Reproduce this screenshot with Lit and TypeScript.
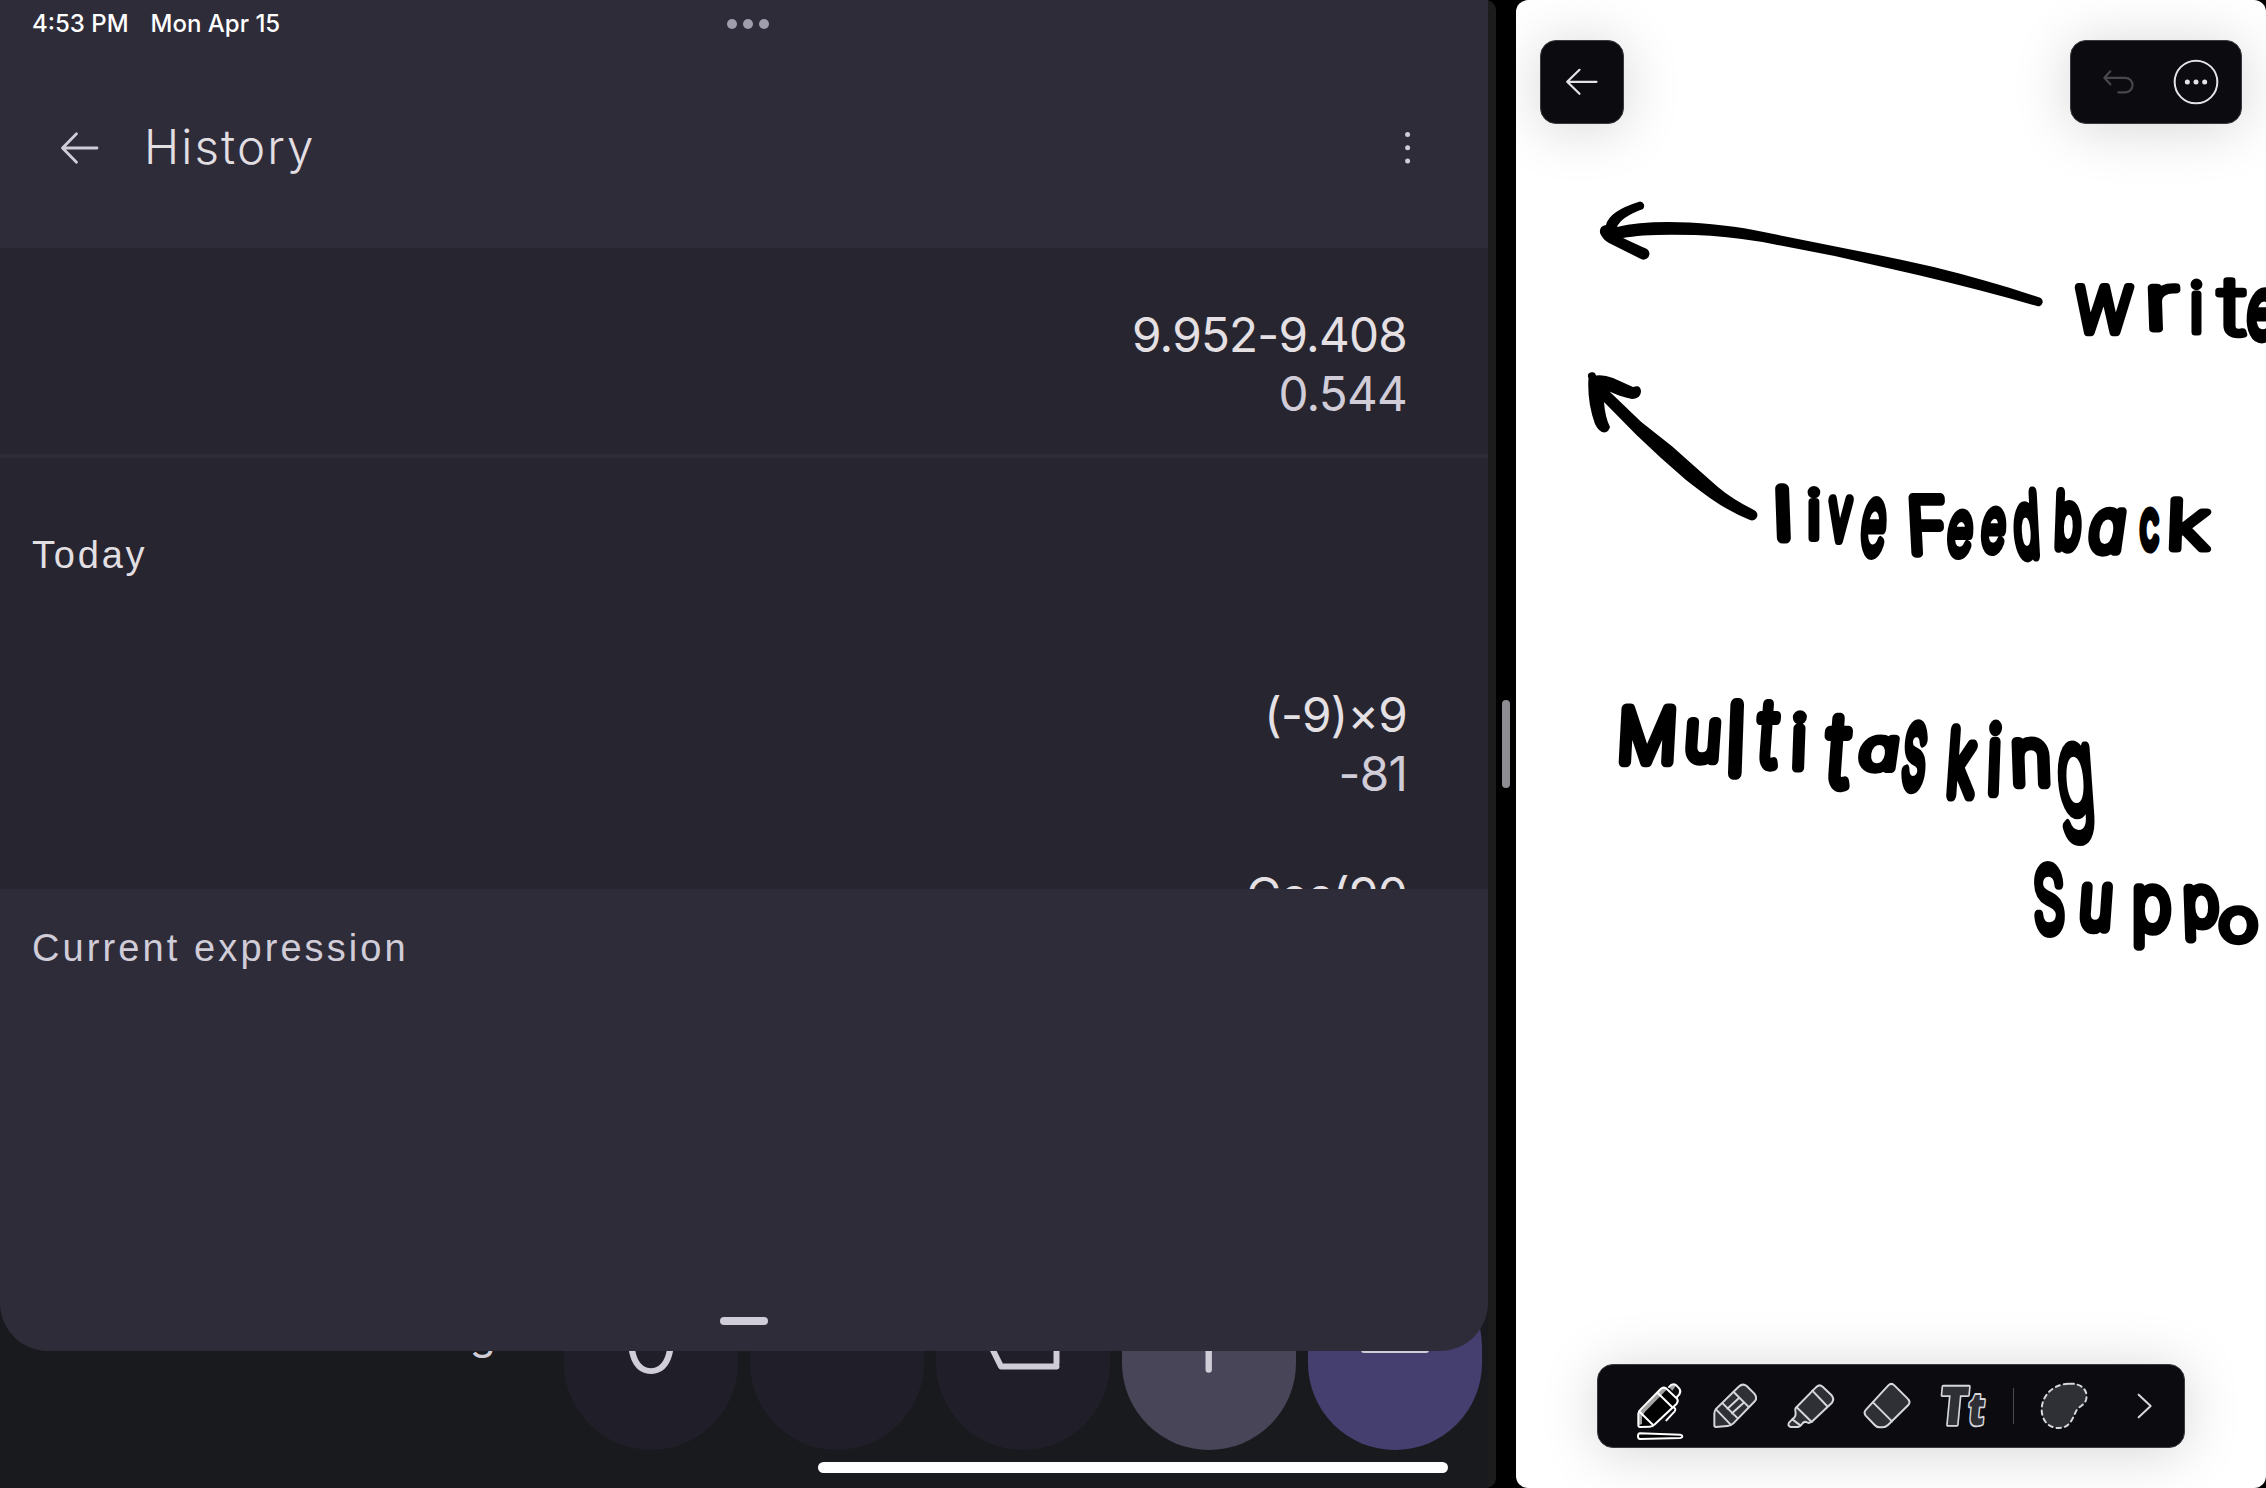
import { LitElement, html, svg, css } from "lit";
import { customElement } from "lit/decorators.js";

type Row = { expr: string; result: string };
/** glyph, left, top, right, bottom, slant in degrees, pen width */
type Ink = [string, number, number, number, number, number?, number?];

const TODAY: Row[] = [
  { expr: "(-9)×9", result: "-81" },
  { expr: "Cos(90", result: "0" },
];

const INK: Ink[] = [
  ["w", 2072, 283, 2135, 336, 3, 12],
  ["r", 2148, 283, 2182, 333, -2, 12],
  ["i", 2190, 278, 2203, 335, 0, 11],
  ["t", 2215, 276, 2247, 340, 0, 11],
  ["e", 2244, 288, 2282, 342, 4, 13],
  ["l", 1775, 483, 1791, 543, -2, 15],
  ["i", 1805, 486, 1823, 542, 0, 12],
  ["v", 1825, 495, 1855, 543, 3, 13],
  ["e", 1857, 498, 1890, 558, 5, 12],
  ["F", 1908, 493, 1948, 557, -3, 13],
  ["e", 1944, 510, 1976, 559, 5, 12],
  ["e", 1978, 507, 2009, 555, 5, 12],
  ["d", 2010, 489, 2042, 561, -3, 13],
  ["b", 2053, 488, 2084, 552, 2, 13],
  ["a", 2085, 507, 2124, 556, 8, 13],
  ["c", 2138, 508, 2161, 552, 0, 12],
  ["k", 2169, 496, 2213, 553, 2, 12],
  ["M", 1618, 704, 1677, 767, 3, 14],
  ["u", 1684, 717, 1722, 765, 4, 14],
  ["l", 1727, 699, 1745, 779, 2, 16],
  ["t", 1752, 699, 1783, 772, 4, 13],
  ["i", 1791, 710, 1807, 772, 2, 13],
  ["t", 1820, 712, 1855, 792, 4, 14],
  ["a", 1856, 734, 1896, 774, 8, 13],
  ["s", 1898, 722, 1931, 792, 5, 13],
  ["k", 1945, 725, 1981, 800, 4, 14],
  ["i", 1986, 720, 2003, 797, 2, 13],
  ["n", 2011, 737, 2051, 789, -2, 14],
  ["g", 2054, 743, 2098, 846, -4, 12],
  ["S", 2031, 863, 2067, 937, -2, 13],
  ["u", 2078, 882, 2114, 933, 4, 14],
  ["p", 2133, 883, 2172, 951, 0, 13],
  ["p", 2183, 884, 2221, 944, -2, 13],
  ["o", 2218, 905, 2259, 946, 0, 12],
];

const EM = 80;
const PEN_FONT = `200 ${EM}px Inter`;
const probe = document.createElement("canvas").getContext("2d")!;

/** Scales one glyph so that its inked outline fills the given box. */
function inkGlyph([ch, l, t, r, b, slant = 0, pen = 12]: Ink) {
  probe.font = PEN_FONT;
  const m = probe.measureText(ch);
  const gw = m.actualBoundingBoxRight + m.actualBoundingBoxLeft;
  const gh = m.actualBoundingBoxAscent + m.actualBoundingBoxDescent;
  const gx = (m.actualBoundingBoxRight - m.actualBoundingBoxLeft) / 2;
  const gy = (m.actualBoundingBoxDescent - m.actualBoundingBoxAscent) / 2;
  const core = pen - 4;
  const ih = b - t - core;
  const iw = r - l - core - ih * Math.abs(Math.tan((slant * Math.PI) / 180));
  const sy = ih / gh;
  const sx = ch === "l" || ch === "i" ? Math.min(sy, 0.9) : iw / gw;
  const cx = (l + r) / 2 - 1516;
  const cy = (t + b) / 2;
  const w = core / Math.sqrt(sx * sy);
  return svg`<text class="ink" stroke-width=${w}
    transform="translate(${cx} ${cy}) skewX(${-slant}) scale(${sx} ${sy}) translate(${-gx} ${-gy})">${ch}</text>`;
}

@customElement("calc-history")
class CalcHistory extends LitElement {
  static styles = css`
    :host { display: block; position: relative; width: 1488px; height: 1488px; background: #191a1e; overflow: hidden; font-family: Inter, "Liberation Sans", sans-serif; }
    .keys { position: absolute; left: 6px; bottom: 38px; display: flex; gap: 12px; }
    .key { width: 174px; height: 190px; border-radius: 87px; display: flex; color: #d0ccd8; }
    .fn { font-size: 42px; line-height: 48px; justify-content: center; padding-top: 50px; box-sizing: border-box; }
    .num { background: #201e28; }
    .op { background: #494558; }
    .eq { background: #453f70; }
    .key svg { width: 174px; height: 190px; }
    .zero { font-size: 94px; font-weight: 300; justify-content: center; line-height: 94px; padding-top: 32px; box-sizing: border-box; }
    .sheet { position: relative; height: 1351px; background: #2f2c3a; border-radius: 0 0 48px 48px; overflow: hidden; display: flex; flex-direction: column; }
    .status { height: 47px; flex: none; display: grid; grid-template-columns: 1fr auto 1fr; align-items: center; padding: 0 0 0 32px; box-sizing: border-box; color: #fff; font-size: 24px; font-weight: 500; }
    .clock { display: flex; gap: 22px; }
    .dots { display: flex; gap: 6px; margin-right: 24px; }
    .dots i { width: 10px; height: 10px; border-radius: 5px; background: #a09dac; }
    .bar { height: 200px; flex: none; display: flex; align-items: center; padding-top: 1px; box-sizing: content-box; }
    .bar .back { width: 42px; height: 36px; margin-left: 59px; }
    .title { margin: -4px 0 0 43px; flex: 1; font-size: 47.5px; font-weight: 300; letter-spacing: 2.1px; color: #e2dfe2; }
    .more { width: 20px; height: 40px; margin-right: 70px; }
    .list { height: 641px; flex: none; background: #27252f; overflow: hidden; display: flex; flex-direction: column; }
    .entry { color: #e4e0e4; font-size: 47.6px; line-height: 58.5px; text-align: right; padding-right: 81px; letter-spacing: -0.75px; }
    .result { color: #d0ccd8; }
    .first { height: 210px; flex: none; padding-top: 58px; box-sizing: border-box; border-bottom: 4px solid #2f2c3a; }
    .label { font-family: "Liberation Sans", Arial, sans-serif; font-size: 38px; line-height: 44px; letter-spacing: 3.1px; padding-left: 32px; }
    .today { color: #e2dfe2; letter-spacing: 2.8px; margin-top: 75px; margin-bottom: 109px; }
    .group { display: flex; flex-direction: column; gap: 63px; }
    .current { flex: 1; color: #d0ccd8; padding-top: 37px; }
    .grab { width: 48px; height: 8px; border-radius: 4px; background: #d0ccd8; align-self: center; margin-bottom: 26px; flex: none; }
    .home { position: absolute; left: 818px; bottom: 15px; width: 630px; height: 11px; border-radius: 6px; background: #fff; }
  `;
  entry(row: Row) {
    return html`<div>${row.expr}</div><div class="result">${row.result}</div>`;
  }
  render() {
    return html`
      <div class="keys">
        <div class="key fn">e</div>
        <div class="key fn"></div>
        <div class="key fn">log</div>
        <div class="key num zero">0</div>
        <div class="key num"></div>
        <div class="key num"><svg viewBox="936 1260 174 190"><path d="M1056.5 1366.500H1001L984 1332L1001 1298H1053Q1056.500 1298 1056.500 1302V1363Q1056.500 1366.500 1053 1366.500Z" fill="none" stroke="#d0ccd8" stroke-width="6" stroke-linejoin="round"/></svg></div>
        <div class="key op"><svg viewBox="1122 1260 174 190"><path d="M1208.700 1298V1369.500M1173 1334H1244" stroke="#d0ccd8" stroke-width="6.400" stroke-linecap="round"/></svg></div>
        <div class="key eq"><svg viewBox="1308 1260 174 190"><path d="M1364 1318H1426M1364 1350H1426" stroke="#d0ccd8" stroke-width="6" stroke-linecap="round"/></svg></div>
      </div>
      <div class="sheet">
        <div class="status">
          <div class="clock"><span>4:53 PM</span><span>Mon Apr 15</span></div>
          <div class="dots"><i></i><i></i><i></i></div>
          <span></span>
        </div>
        <div class="bar">
          <svg class="back" viewBox="59 129.500 42 36"><path d="M97 147.500H62.500M76.500 133.200L62.500 147.500L76.500 161.800" fill="none" stroke="#d0ccd8" stroke-width="2.800" stroke-linecap="round" stroke-linejoin="round"/></svg>
          <h1 class="title">History</h1>
          <svg class="more" viewBox="0 0 20 40" fill="#d0ccd8"><circle cx="9.600" cy="6.500" r="2.500"/><circle cx="9.600" cy="19.700" r="2.500"/><circle cx="9.600" cy="33" r="2.500"/></svg>
        </div>
        <div class="list">
          <div class="entry first">${this.entry({ expr: "9.952-9.408", result: "0.544" })}</div>
          <div class="label today">Today</div>
          <div class="group">${TODAY.map((r) => html`<div class="entry">${this.entry(r)}</div>`)}</div>
        </div>
        <div class="label current">Current expression</div>
        <div class="grab"></div>
      </div>
      <div class="home"></div>
    `;
  }
}

@customElement("note-canvas")
class NoteCanvas extends LitElement {
  static styles = css`
    :host { display: block; position: relative; width: 750px; height: 1488px; background: #fff; border-radius: 12px; overflow: hidden; }
    .page { position: absolute; inset: 0; width: 750px; height: 1488px; }
    .ink { font: 200 80px Inter, sans-serif; font-feature-settings: "cv11" 1; fill: #000; stroke: #000; stroke-linejoin: round; stroke-linecap: round; }
    .top { position: absolute; left: 24px; right: 24px; top: 40px; display: flex; justify-content: space-between; }
    .pill { height: 84px; box-sizing: border-box; background: #0b0b10; border: 1px solid #3b3b3f; border-radius: 16px; display: flex; box-shadow: 0 4px 56px rgba(0, 0, 0, 0.17); }
    .pill svg { display: block; height: 84px; margin-top: -1px; flex: none; }
    .nav { width: 84px; }
    .nav svg { width: 84px; margin-left: -1px; }
    .acts { width: 172px; }
    .acts svg { width: 172px; margin-left: -1px; }
    .tools { position: absolute; left: 81px; top: 1364px; width: 588px; padding-left: 23px; }
    .tools svg { width: 76px; }
    .sep { width: 1px; height: 36px; margin: 23px 12px 0; background: #4b4b50; flex: none; }
    .s { fill: none; stroke: #d5d7dc; stroke-width: 6; stroke-linejoin: round; stroke-linecap: round; }
    .s .f, .f { fill: #2f3035; }
    .w { stroke: #fff; }
    .tt { font: 800 161px "Open Sans", "Noto Sans", sans-serif; fill: #2f3035; stroke: #d5d7dc; stroke-width: 11; paint-order: stroke; stroke-linejoin: round; }
    .small { font-size: 136px; }
  `;
  render() {
    return html`
      <svg class="page" viewBox="0 0 750 1488">
        <g transform="translate(-1516 0)">
          <path d="M2039.500 297.500C2005 286 1970 276 1933.700 267Q1890 257 1848 249L1753.600 230C1730 225.500 1695 222 1668 222Q1637 222 1617 227Q1621 217 1643 209A4.500 4.500 0 0 0 1640 201.500Q1609 211 1606 225Q1599 226 1600 233Q1603 240 1609 243L1640 258.500A5.500 5.500 0 0 0 1647 249Q1640 246 1623 238Q1645 233.500 1695 235Q1725 236 1762.600 242L1834.700 256L1920 275.500Q1985 291 2037 306A4.300 4.300 0 0 0 2039.500 297.500Z"/>
          <path d="M1588 377A4 4 0 0 1 1596 375.500Q1604 374.500 1613 378L1633 387Q1641 384 1641 392Q1640 399 1632 399Q1619 396 1609.500 391.500L1641 421.700L1672.600 446.700L1695 466.700L1717.600 486.700Q1732 499 1754 510A5 5 0 0 1 1750 520Q1730 512 1711 498.700Q1700 491 1686 480L1661 458L1636.500 435L1604 402Q1605 417 1610 427Q1608 434 1602 432Q1598 430 1595 424Q1587 402 1588.500 378Z"/>
        </g>
        ${INK.map(inkGlyph)}
      </svg>
      <div class="top">
        <div class="pill nav"><svg viewBox="1540 40 84 84"><path d="M1596.500 81.800H1567.500M1579.500 69.800L1567.200 81.800L1579.500 93.800" fill="none" stroke="#e4e4e8" stroke-width="2.200" stroke-linecap="round" stroke-linejoin="round"/></svg></div>
        <div class="pill acts"><svg viewBox="90 60 516 252">
          <path d="M211 154L193 173L211 193M193 173.500H256A21.500 21.500 0 0 1 256 217H235" fill="none" stroke="#48484c" stroke-width="6.500" stroke-linecap="round" stroke-linejoin="round"/>
          <circle cx="468" cy="186" r="64" fill="none" stroke="#e4e4e8" stroke-width="6"/>
          <g fill="#e4e4e8"><circle cx="442" cy="186" r="7.500"/><circle cx="468" cy="186" r="7.500"/><circle cx="494" cy="186" r="7.500"/></g>
        </svg></div>
      </div>
      <div class="pill tools">
        <svg viewBox="3 -18 228 252">
          <path d="M56 171L55 131Q56 124 62 118L122 57Q130 50 138 55L171 86Q176 93 170 101L103 164Q97 170 89 170Z" fill="#000"/>
          <path d="M56 166V131Q56 124 62 118L122 57Q130 50 137 55L141 58L74 127L66 140V162ZM146 50Q157 37 169 46L157 62Z" fill="#a2a2a2"/>
          <g class="s w">
            <path d="M60 171Q55 171 55 165V131Q56 124 62 118L122 57Q130 50 138 55L171 86Q176 93 170 101L103 164Q97 170 89 170Z"/>
            <path d="M147 51Q157 38 169 46L178 56Q184 64 178 73L171 81M114 70L157 112M57 124L100 166"/>
            <path d="M161 112Q169 116 164 124L139 151"/>
            <path d="M60 190L181 194Q187 195 187 199Q187 203 181 204L60 207Q54 207 54 199Q54 190 60 190Z" fill="#000"/>
          </g>
        </svg>
        <svg viewBox="231 -18 228 252"><g class="s">
          <path class="f" d="M283 166V130Q283 122 289 116L356 50Q368 39 380 48L403 71Q413 83 405 93L340 160Q332 168 322 168L288 171Q283 171 283 166Z"/>
          <path d="M341 66L385 110M288 118L332 164M308 100L351 143M322 116L357 84M336 130L371 98"/>
        </g></svg>
        <svg viewBox="459 -18 228 252"><g class="s">
          <path class="f" d="M527 114L587 53Q597 41 608 50L634 75Q644 86 636 98L577 154Q567 162 559 156Q550 154 546 162Q540 171 532 171H512Q502 168 507 158L519 146Q530 138 526 122Q525 117 527 114Z"/>
          <path d="M577 62L621 108M530 112L575 156M517 148L541 166"/>
        </g></svg>
        <svg viewBox="687 -18 228 252"><g class="s">
          <path class="f" d="M805 46Q814 37 823 46L863 86Q873 95 865 105L804 165Q797 172 788 172H779Q770 172 764 165L737 137Q730 127 738 119Z"/>
          <path d="M759 97L816 154"/>
        </g></svg>
        <svg viewBox="75 -18 228 252"><text class="tt" transform="translate(115 165) skewX(-5.500)" textLength="85" lengthAdjust="spacingAndGlyphs">T</text><text class="tt small" transform="translate(200 166) skewX(-5.500)" textLength="50" lengthAdjust="spacingAndGlyphs">t</text></svg>
        <div class="sep"></div>
        <svg viewBox="378 -18 228 252"><path class="s f" stroke-dasharray="13 12" d="M508 41C545 39 566 62 558 90C552 108 536 108 528 124C518 145 510 174 476 174C440 174 425 145 425 118C426 75 460 42 508 41Z"/></svg>
        <svg viewBox="606 -18 228 252"><path class="s" d="M716 74L752 108L716 142"/></svg>
      </div>
    `;
  }
}

@customElement("app-root")
class AppRoot extends LitElement {
  static styles = css`
    :host { display: flex; width: 2266px; height: 1488px; background: #000; overflow: hidden; }
    .app { width: 1496px; background: #1c1c1c; border-radius: 0 10px 10px 0; overflow: hidden; flex: none; }
    .split { width: 20px; display: flex; align-items: center; justify-content: center; flex: none; }
    .handle { width: 8px; height: 88px; border-radius: 4px; background: #8e8d93; }
    note-canvas { flex: none; }
  `;
  render() {
    return html`
      <div class="app"><calc-history></calc-history></div>
      <div class="split"><div class="handle"></div></div>
      <note-canvas></note-canvas>
    `;
  }
}
